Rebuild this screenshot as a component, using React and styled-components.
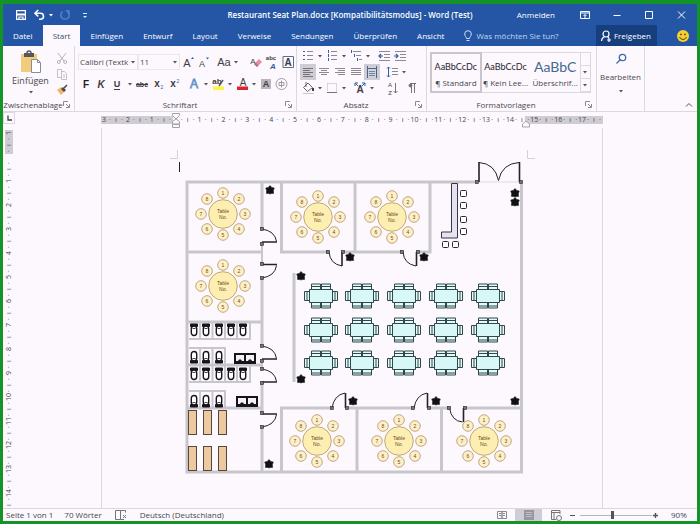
import { useState } from "react";
import styled, { createGlobalStyle, css } from "styled-components";

const theme = {
  blue: "#2456a5",
  darkBlue: "#173f7d",
  green: "#149328",
  bg: "#fcf8fe",
  line: "#dcd8e0",
  shade: "#cfccd3",
  text: "#4a474e",
  ink: "#26242a",
  wall: "#c8c5cc",
};

const tabs = [
  "Datei",
  "Start",
  "Einfügen",
  "Entwurf",
  "Layout",
  "Verweise",
  "Sendungen",
  "Überprüfen",
  "Ansicht",
];

const styleCards = [
  { sample: "AaBbCcDc", name: "¶ Standard" },
  { sample: "AaBbCcDc", name: "¶ Kein Lee..." },
  { sample: "AaBbC", name: "Überschrif...", heading: true },
];

// ribbon icons, all drawn on a 16x16 grid
const lines = (color, rows) =>
  rows.map(([x1, x2, y]) => (
    <path key={`${x1}-${y}`} d={`M${x1} ${y}H${x2}`} stroke={color} />
  ));

const letter = (text, x, y, size, extra) => (
  <text x={x} y={y} fontSize={size} textAnchor="middle" fill="#3f3c44" {...extra}>
    {text}
  </text>
);

const glyphs = {
  save: (
    <g fill="none" stroke="#fff" strokeWidth="1.2">
      <path d="M3.6 3.6h8.8v8.8H3.6z" />
      <path d="M3.5 7.5h9" strokeWidth="2" />
      <path d="M6 12V10h4v2" />
    </g>
  ),
  undo: (
    <g fill="none" stroke="#fff" strokeWidth="1.6">
      <path d="M4.5 6.2h5a3 3 0 0 1 0 6H8" />
      <path d="M7.2 3 4 6.2l3.2 3.2" />
    </g>
  ),
  redo: (
    <g fill="none" stroke="#5d88c8" strokeWidth="1.3">
      <path d="M10.5 4.6A4.2 4.2 0 1 1 5.6 4.6" />
      <path d="M8.6 3.8h3.2V7" />
    </g>
  ),
  customize: (
    <g fill="#dce7f6">
      <path d="M6 6h4v1H6zM6 9h4l-2 2z" />
    </g>
  ),
  ribbonOptions: (
    <g fill="none" stroke="#fff">
      <path d="M3.5 4.5h9v7h-9zM3.5 6h9M8 11V7.500M6.500 9 8 7.500 9.500 9" />
    </g>
  ),
  minimize: <path d="M4.500 8.500h7" stroke="#fff" />,
  maximize: <path d="M4.500 4.500h7v7h-7z" stroke="#fff" fill="none" />,
  close: <path d="m5 4.500 7 7m0-7-7 7" stroke="#fff" fill="none" />,
  bulb: (
    <g fill="none" stroke="#cfdef3">
      <path d="M6.500 10.500C6.500 9 4.700 8.300 4.700 6a3.300 3.300 0 0 1 6.600 0c0 2.300-1.800 3-1.800 4.500zM6.500 12.500h3" />
    </g>
  ),
  share: (
    <g fill="none" stroke="#fff" strokeWidth="1.200">
      <circle cx="8" cy="6" r="3" />
      <path d="M3.500 13c.2-2.500 1.500-3.600 3-4.200M9.500 8.600l1.400 1.400M9 12h4M11 10v4" />
    </g>
  ),
  smiley: (
    <g>
      <circle cx="8" cy="8" r="6" fill="#f8cf31" />
      <circle cx="6" cy="6.400" r=".9" fill="#5b4510" />
      <circle cx="10" cy="6.400" r=".9" fill="#5b4510" />
      <path d="M4.600 9c1 3.200 5.800 3.200 6.800 0" fill="none" stroke="#5b4510" />
    </g>
  ),
  cut: (
    <g fill="none" stroke="#b6b2bb">
      <path d="m4 3 6 8M12 3l-6 8" />
      <circle cx="4.800" cy="12" r="1.500" />
      <circle cx="11.200" cy="12" r="1.500" />
    </g>
  ),
  copy: (
    <g fill="none" stroke="#c3bfc8">
      <path d="M3.500 3.500h4v8h-4zM7.500 5.500h3l2 2v6h-5zM9 9h2M9 11h2" />
    </g>
  ),
  brush: (
    <g>
      <path d="M3 8l4-3 4 4-4 4z" fill="#edb866" />
      <path d="m7 7 2-2 3 3-2 2z" fill="#4d4953" />
      <path d="m10 6 3-3" stroke="#4d4953" strokeWidth="1.600" />
    </g>
  ),
  grow: (
    <g>
      {letter("A", 7, 13, 11)}
      <path d="m11 5 1.500-2L14 5z" fill="#2f5fa8" />
    </g>
  ),
  shrink: (
    <g>
      {letter("A", 6, 13, 9)}
      <path d="M10 3.500h3L11.500 5.500z" fill="#2f5fa8" />
    </g>
  ),
  changeCase: letter("Aa", 8, 12, 11),
  eraser: (
    <g>
      {letter("A", 5, 10, 8)}
      <path d="m6 10 5-5 3 3-5 5z" fill="#e58ba4" />
      <path d="m6 10 1.500-1.500 3 3L9 13z" fill="#b66d87" />
    </g>
  ),
  phonetic: (
    <g>
      {letter("abc", 7, 6, 6, { fontWeight: 700 })}
      {letter("A", 9, 15, 8, { fill: "#2f5fa8", fontStyle: "italic", fontWeight: 700 })}
    </g>
  ),
  boxedA: (
    <g>
      <path d="M3 2.500h10.500v11H3z" fill="none" stroke="#5d7089" />
      {letter("A", 8, 12, 10, { fontWeight: 700 })}
    </g>
  ),
  bold: letter("F", 8, 12, 10, { fontWeight: 700, fill: "#1f1d23" }),
  italic: letter("K", 7, 12, 10, { fontWeight: 700, fontStyle: "italic" }),
  underline: (
    <g>
      {letter("U", 7, 11, 9, { fontWeight: 700 })}
      <path d="M4 13.500h6" stroke="#3f3c44" />
    </g>
  ),
  strike: (
    <g>
      {letter("abc", 8, 11, 7, { fontWeight: 700 })}
      <path d="M2 8.500h12" stroke="#3f3c44" />
    </g>
  ),
  sub: (
    <g>
      {letter("x", 7, 11, 10, { fontWeight: 700 })}
      {letter("2", 12, 13, 5, { fill: "#2f5fa8" })}
    </g>
  ),
  sup: (
    <g>
      {letter("x", 7, 11, 10, { fontWeight: 700 })}
      {letter("2", 12, 7, 5, { fill: "#2f5fa8" })}
    </g>
  ),
  effects: letter("A", 8, 12, 12, { fill: "#fff", stroke: "#5c93cc", strokeWidth: 0.8 }),
  highlight: (
    <g>
      <path d="M3 10.500h11v3.500H3z" fill="#fbf63c" />
      {letter("ab", 7, 8, 8, { fontWeight: 700 })}
      <path d="m9 10 4-6" stroke="#5b5760" strokeWidth="1.500" />
    </g>
  ),
  fontColor: (
    <g>
      {letter("A", 9, 10, 10)}
      <path d="M3 10.500h11v3.500H3z" fill="#dc2430" />
    </g>
  ),
  shadedA: (
    <g>
      <path d="M3 3h10v10H3z" fill="#b9b6be" />
      {letter("A", 8, 11, 9, { fontWeight: 700 })}
    </g>
  ),
  ringed: (
    <g fill="none" stroke="#8b8791" strokeWidth=".8">
      <circle cx="7.500" cy="8" r="5.500" />
      <path d="M5 6.500h5v3H5zM7.500 4.500v7" />
    </g>
  ),
  bullets: (
    <g>
      {lines("#8c8892", [[7, 13, 3.5], [7, 13, 7.5], [7, 13, 11.5]])}
      {lines("#2f5fa8", [[3, 5, 3.5], [3, 5, 7.5], [3, 5, 11.5]])}
    </g>
  ),
  numbers: (
    <g>
      {lines("#8c8892", [[7, 13, 3.5], [7, 13, 7.5], [7, 13, 11.5]])}
      <path d="M4.500 2v3M4.500 6v3M4.500 10v3" stroke="#2f5fa8" />
    </g>
  ),
  multilevel: (
    <g>
      {lines("#8c8892", [[5, 13, 3.5], [8, 13, 7.5], [11, 14, 11.5]])}
      <path d="M3.500 2v3M6.500 6v3M9.500 10v3" stroke="#2f5fa8" />
    </g>
  ),
  outdent: (
    <g>
      {lines("#8c8892", [[3, 14, 3.5], [8, 14, 6.5], [8, 14, 9.5], [3, 14, 12.5]])}
      <path d="M7 8H3M5 6 3 8l2 2" fill="none" stroke="#2f5fa8" strokeWidth="1.200" />
    </g>
  ),
  indent: (
    <g>
      {lines("#8c8892", [[3, 14, 3.5], [8, 14, 6.5], [8, 14, 9.5], [3, 14, 12.5]])}
      <path d="M2 8h4M4 6l2 2-2 2" fill="none" stroke="#2f5fa8" strokeWidth="1.200" />
    </g>
  ),
  left: lines("#77737d", [[3, 13, 4.5], [3, 10, 6.5], [3, 13, 8.5], [3, 10, 10.5], [3, 13, 12.5]]),
  center: lines("#8c8892", [[3, 13, 4.5], [5, 11, 6.5], [3, 13, 8.5], [5, 11, 10.5]]),
  right: lines("#8c8892", [[3, 13, 4.5], [6, 13, 6.5], [3, 13, 8.5], [6, 13, 10.5]]),
  justify: lines("#8c8892", [[3, 13, 4.5], [3, 13, 6.5], [3, 13, 8.5], [3, 13, 10.5]]),
  distribute: (
    <g>
      <path d="M3 3h10v10H3z" fill="#ccd5e2" />
      <path d="M3.500 2v12M12.500 2v12M3 4.500h10" stroke="#45658f" />
      {lines("#77839a", [[5, 11, 7.5], [5, 11, 9.5], [5, 11, 11.5]])}
    </g>
  ),
  spacing: (
    <g>
      {lines("#8c8892", [[8, 14, 4.5], [8, 14, 7.5], [8, 14, 10.5]])}
      <path d="M4.500 3v10M3 4.500 4.500 3 6 4.500M3 11.500 4.500 13 6 11.500" fill="none" stroke="#2f5fa8" />
    </g>
  ),
  bucket: (
    <g fill="none" stroke="#6a6670">
      <path d="m8 3 4.500 4.500-5 4-4-4zM6 2v5" />
      <path d="M13 8v3" stroke="#3f3c44" strokeWidth="2" />
      <path d="M3 13.500h11" stroke="#c9c5ce" />
    </g>
  ),
  borders: (
    <g fill="none" stroke="#b6b2bb">
      <path d="M3.500 3.500h9v8" strokeDasharray="1 1" />
      <path d="M3.500 3.500v8" strokeDasharray="1 1" />
      <path d="M3 12.500h10" stroke="#77737d" />
    </g>
  ),
  asian: (
    <g>
      {letter("A", 8, 13, 10, { fontWeight: 700 })}
      <path d="M3 3l3 3M3 6V3h3M13 3l-3 3M13 6V3h-3" fill="none" stroke="#2f5fa8" />
    </g>
  ),
  sort: (
    <g>
      {letter("A", 6, 7, 6)}
      {letter("Z", 6, 15, 6)}
      <path d="M11.500 3v10M9.500 11l2 2 2-2" fill="none" stroke="#77737d" />
    </g>
  ),
  pilcrow: (
    <g stroke="#77737d" fill="none">
      <path d="M7.500 4v9M10.500 4v9M6 3.500h6" />
      <circle cx="6.500" cy="5.500" r="1.500" fill="#77737d" />
    </g>
  ),
  find: (
    <g fill="none" stroke="#3c6ca8" strokeWidth="1.300">
      <circle cx="9.500" cy="6.500" r="3.200" />
      <path d="M7 9 3.500 12.500" />
    </g>
  ),
  proofing: (
    <g fill="none" stroke="#77737d">
      <path d="M2.500 3.500h5v9h-5zM7.500 12.500v-9h5v2M8 12.500h3M10 8l3 3M13 8l-3 3" />
    </g>
  ),
  readMode: (
    <g fill="none" stroke="#8c8892">
      <path d="M3.500 4.500h4.500v7H3.500zM8 4.500h4.500v7H8zM5 6.500h2M5 8.500h2M9 6.500h2M9 8.500h2" />
    </g>
  ),
  printLayout: (
    <g>
      <path d="M3 3h10v10H3z" fill="#9a969f" />
      {lines("#c0bcc5", [[5, 11, 5.5], [5, 11, 7.5], [5, 11, 9.5]])}
    </g>
  ),
  webLayout: (
    <g fill="none" stroke="#77737d">
      <path d="M12 7V3.500H3.500v9H8M3.500 5.500H12M6 6v6" />
      <circle cx="11" cy="11" r="2.500" />
    </g>
  ),
};

const Glyph = ({ name }) => (
  <GlyphSvg viewBox="0 0 16 16" aria-hidden="true">
    {glyphs[name]}
  </GlyphSvg>
);

const Caret = ({ color = "#55515a" }) => (
  <CaretSvg viewBox="0 0 8 8" aria-hidden="true">
    <path d="M2 3h4L4 5.500z" fill={color} />
  </CaretSvg>
);

const Tool = ({ icon, label, active, caret }) => (
  <ToolButton type="button" aria-label={label} $active={active}>
    <Glyph name={icon} />
    {caret && <Caret />}
  </ToolButton>
);

const PasteIcon = () => (
  <svg width="24" height="24" viewBox="0 0 24 24" aria-hidden="true">
    <path d="M2 4h16v18H2z" fill="#f2cc7c" />
    <path d="M5 3h10v4H5z" fill="#5a5660" />
    <path d="M8 3a2 2 0 0 1 4 0" fill="none" stroke="#5a5660" strokeWidth="1.500" />
    <path d="M12.500 9.500h6l3 3v10h-9z" fill="#fff" stroke="#8f8b96" />
    <path d="M18.500 9.500v3h3" fill="none" stroke="#8f8b96" />
  </svg>
);

// floor plan
const seatSpots = [
  [0, -21],
  [16, -15],
  [22, 0],
  [16, 15],
  [0, 21],
  [-16, 15],
  [-22, 0],
  [-16, -15],
];

const RoundTable = ({ x, y }) => (
  <g transform={`translate(${x} ${y})`} stroke="#b3945f" strokeWidth=".8" fill="#fdf0c8">
    <circle r="14.300" fill="#fdeeb2" />
    {seatSpots.map(([sx, sy], i) => (
      <circle key={i} cx={sx} cy={sy} r="5.300" />
    ))}
    <g stroke="none" fill="#6b4a25" textAnchor="middle">
      {seatSpots.map(([sx, sy], i) => (
        <text key={i} x={sx} y={sy + 2} fontSize="5">
          {i + 1}
        </text>
      ))}
      <text y="-1" fontSize="5">
        Table
      </text>
      <text y="5" fontSize="5">
        No.
      </text>
    </g>
  </g>
);

const DiningTable = ({ x, y }) => (
  <g transform={`translate(${x} ${y})`} fill="#e4fbfb" stroke="#31484b">
    {[-9.5, 0.5].map((cx) => (
      <g key={cx}>
        <path d={`M${cx} -12h9v7h-9zM${cx} -9.500h9`} />
        <path d={`M${cx} 5h9v7h-9zM${cx} 10h9`} />
      </g>
    ))}
    <path d="M-16.500-4.500h6v9h-6zM-14-4.500v9M10.500-4.500h6v9h-6zM14-4.500v9" />
    <path d="M-11.500-6.500h23v13h-23z" fill="#d7f8f6" />
  </g>
);

const Plant = ({ x, y }) => (
  <path
    transform={`translate(${x} ${y})`}
    d="M0-4.500 1.800-2.600 4.300-2 3.400.6 3.600 3.400 1.200 3.600 0 4-1.200 3.600-3.600 3.400-3.400.6-4.300-2-1.800-2.600z"
    fill="#111"
    stroke="#111"
    strokeWidth=".5"
  />
);

const Toilet = ({ x, y, flip }) => (
  <g transform={`translate(${x} ${y}) scale(1 ${flip ? -1 : 1})`} fill="#fff" stroke="#17151a">
    <path d="M-3.500-6h7v2.500h-7z" fill="#17151a" />
    <rect x="-2.700" y="-4" width="5.400" height="9.500" rx="2.700" strokeWidth="1.400" />
    <path d="M-1.500-1.500h3" strokeWidth=".8" />
  </g>
);

const Sink = ({ x, y }) => (
  <g transform={`translate(${x} ${y})`}>
    <path d="M0 0h22v11H0z" fill="#17151a" />
    <path d="M2 2h8v6H8L7 6.500H5L4 8H2zM12 2h8v6h-2l-1-1.500h-2L14 8h-2z" fill="#f4f2f6" />
  </g>
);

const roundTables = [[223, 214], [223, 286], [318, 217], [392, 217], [317, 441], [399, 441], [484, 441]];
const plants = [
  [270, 190], [350, 257], [424, 257], [301, 276], [301, 379], [515, 193],
  [515, 202], [269, 464], [353, 401], [436, 401], [515, 401],
];
const tableColumns = [321, 362, 404, 446, 488];
const tableRows = [296, 330, 363];
const stallColumns = [194, 206, 219, 231, 243];
const hinges = [
  [262, 229], [262, 244], [262, 264], [262, 278], [262, 346], [262, 361], [262, 369], [262, 383],
  [262, 413], [262, 427], [328, 252], [343, 252], [402, 252], [418, 252], [332, 408], [347, 408],
  [413, 408], [429, 408], [449, 408], [465, 408], [477, 182], [521, 182],
];

const FloorPlan = () => (
  <PlanSvg viewBox="168 148 368 332" role="img" aria-label="Restaurant Seat Plan">
    <path d="M170 158.500h7.500V150M535 158.500h-7.500V150" fill="none" stroke="#d4d0d9" />
    <path d="M179.500 162v10" stroke="#222" />
    <g fill="none" stroke={theme.wall} strokeWidth="3">
      <path d="M477 182H187v290h334.500V182" />
      <path d="M262 182v47M262 278v68M262 383v30M262 427v45" />
      <path d="M262 244v20M262 361v8" strokeWidth="2" />
      <path d="M187 252h75M187 322h75M187 365h75M187 408h75" />
      <path d="M281.500 182v70H328M343 252h59M355 182v70M418 252h12v-70" />
      <path d="M281.500 472v-64H332M347 408h66M429 408h20M465 408h56M357 408v64M441.500 408v64" />
      <path d="M294 273v109" />
      <path d="M189 339h61M200 322v17M212.500 322v17M225 322v17M237 322v17M250 322v18" strokeWidth="2" />
      <path d="M189 348h37M200 348v17M212.500 348v17M225 348v17" strokeWidth="2" />
      <path d="M189 382h61M200 365v17M212.500 365v17M225 365v17M237 365v17M250 365v18" strokeWidth="2" />
      <path d="M189 391h37M200 391v17M212.500 391v17M225 391v17" strokeWidth="2" />
    </g>
    <path d="M479 182h40" stroke="#dedbe2" />
    <g fill="none" stroke="#242228">
      <path d="M262 229q13 2 14.500 12.500" />
      <path d="M262 278q13-2 14.500-12.500" />
      <path d="M262 346q13 2 14.500 12.500" />
      <path d="M262 369q13 2 14.500 12.500" />
      <path d="M262 427q13-2 14.500-12.500" />
      <path d="M329 252q1 12 13 14" />
      <path d="M403 252q1 12 13 14" />
      <path d="M332 408q2-13 13-15" />
      <path d="M414 408q2-13 13-15" />
      <path d="M449.500 408q2 13 13 14" />
      <path d="M479 162.500q16 1 19.500 18q3.500-17 20.500-18" />
      <path
        d="M262 242h15M262 264.500h15M262 359h15M262 382h15M262 414h15M342 252v14M416.500 252v14M345.500 393v15M427.500 393v15M463.500 408v14M479 162v20M519.500 162v20"
        strokeWidth="1.600"
      />
    </g>
    {hinges.map(([x, y]) => (
      <rect key={`${x}-${y}`} x={x - 1.5} y={y - 1.5} width="3" height="3" fill="#77737d" stroke="#242228" strokeWidth=".6" />
    ))}
    <path d="M451.500 183.500h6v54.500h-16v-6h10z" fill="#e6e2f1" stroke="#3a3742" />
    <g fill="#fff" stroke="#2b2930">
      {[[463, 193], [463, 205], [463, 219], [463, 231], [445, 244], [455, 244]].map(([x, y]) => (
        <rect key={`${x}-${y}`} x={x - 2.5} y={y - 2.5} width="6" height="6" rx="1" />
      ))}
    </g>
    {roundTables.map(([x, y]) => (
      <RoundTable key={`${x}-${y}`} x={x} y={y} />
    ))}
    {tableRows.map((y) => tableColumns.map((x) => <DiningTable key={`${x}-${y}`} x={x} y={y} />))}
    {stallColumns.map((x) => (
      <g key={x}>
        <Toilet x={x} y={330} />
        <Toilet x={x} y={374} />
      </g>
    ))}
    {stallColumns.slice(0, 3).map((x) => (
      <g key={x}>
        <Toilet x={x} y={357} flip />
        <Toilet x={x} y={401} flip />
      </g>
    ))}
    <Sink x={234} y={353} />
    <Sink x={236} y={396} />
    {[188.5, 203.5, 218.5].map((x) =>
      [410.5, 446.5].map((y) => (
        <rect key={`${x}-${y}`} x={x} y={y} width="8" height="24" fill="#ecc99f" stroke="#57493a" />
      ))
    )}
    {plants.map(([x, y]) => (
      <Plant key={`${x}-${y}`} x={x} y={y} />
    ))}
  </PlanSvg>
);

// four marks per centimetre: number, dot, tick, dot
const rulerMark = (quarter) => {
  if (quarter % 4 === 0) return quarter === 0 ? "" : String(Math.abs(quarter / 4));
  return quarter % 2 === 0 ? "ı" : "·";
};

const range = (from, to) => Array.from({ length: to - from }, (_, i) => from + i);

const RulerPart = ({ from, to, shaded, vertical }) => (
  <RulerSegment $count={to - from} $shaded={shaded} $vertical={vertical}>
    {range(from, to).map((q) => (
      <RulerMark key={q} $vertical={vertical}>
        {rulerMark(q)}
      </RulerMark>
    ))}
  </RulerSegment>
);

const GroupFooter = ({ children }) => (
  <GroupLabel>
    <span>{children}</span>
    <Launcher type="button" aria-label={`${children} öffnen`}>
      <svg width="7" height="7" viewBox="0 0 7 7">
        <path d="M.5 5V.5H5M3 3l3 3M6.500 3v3.500H3" fill="none" stroke="#8c8892" />
      </svg>
    </Launcher>
  </GroupLabel>
);

const App = () => {
  const [activeTab, setActiveTab] = useState("Start");
  const [activeStyle, setActiveStyle] = useState(0);
  const [zoom, setZoom] = useState(90);

  return (
    <Window>
      <GlobalStyle />
      <Header>
        <TitleBar>
          <QuickAccess>
            <HeaderButton type="button" aria-label="Speichern" $width={20}>
              <Glyph name="save" />
            </HeaderButton>
            <HeaderButton type="button" aria-label="Rückgängig" $width={24}>
              <Glyph name="undo" />
              <Caret color="#fff" />
            </HeaderButton>
            <HeaderButton type="button" aria-label="Wiederholen" $width={20}>
              <Glyph name="redo" />
            </HeaderButton>
            <HeaderButton type="button" aria-label="Symbolleiste anpassen" $width={20}>
              <Glyph name="customize" />
            </HeaderButton>
          </QuickAccess>
          <Title>Restaurant Seat Plan.docx [Kompatibilitätsmodus] - Word (Test)</Title>
          <WindowControls>
            <SignIn type="button">Anmelden</SignIn>
            <HeaderButton type="button" aria-label="Menüband-Anzeigeoptionen" $width={32}>
              <Glyph name="ribbonOptions" />
            </HeaderButton>
            <HeaderButton type="button" aria-label="Minimieren" $width={32}>
              <Glyph name="minimize" />
            </HeaderButton>
            <HeaderButton type="button" aria-label="Maximieren" $width={32}>
              <Glyph name="maximize" />
            </HeaderButton>
            <HeaderButton type="button" aria-label="Schließen" $width={32}>
              <Glyph name="close" />
            </HeaderButton>
          </WindowControls>
        </TitleBar>

        <TabBar>
          {tabs.map((tab) => (
            <Tab key={tab} type="button" $active={tab === activeTab} onClick={() => setActiveTab(tab)}>
              {tab}
            </Tab>
          ))}
          <TellMe>
            <Glyph name="bulb" />
            <TellMeInput aria-label="Was möchten Sie tun?" placeholder="Was möchten Sie tun?" />
          </TellMe>
          <ShareButton type="button">
            <Glyph name="share" />
            Freigeben
          </ShareButton>
          <HeaderButton type="button" aria-label="Feedback" $width={28}>
            <Glyph name="smiley" />
          </HeaderButton>
        </TabBar>
      </Header>

      <Ribbon>
        <Group $width={72}>
          <ClipboardTools>
            <BigButton type="button">
              <PasteIcon />
              Einfügen
              <Caret />
            </BigButton>
            <Stack>
              <Tool icon="cut" label="Ausschneiden" />
              <Tool icon="copy" label="Kopieren" />
              <Tool icon="brush" label="Format übertragen" />
            </Stack>
          </ClipboardTools>
          <GroupFooter>Zwischenablage</GroupFooter>
        </Group>

        <Group $width={222}>
          <FontTools>
            <ToolRow>
              <SelectBox $width={60}>
                <select aria-label="Schriftart">
                  <option>Calibri (Textk</option>
                </select>
                <Caret />
              </SelectBox>
              <SelectBox $width={42}>
                <select aria-label="Schriftgrad">
                  <option>11</option>
                </select>
                <Caret />
              </SelectBox>
              <Tool icon="grow" label="Schriftgrad vergrößern" />
              <Tool icon="shrink" label="Schriftgrad verkleinern" />
              <Space />
              <Tool icon="changeCase" label="Groß-/Kleinschreibung" caret />
              <Space />
              <Space />
              <Tool icon="eraser" label="Formatierung löschen" />
              <Tool icon="phonetic" label="Phonetische Anleitung" />
              <Tool icon="boxedA" label="Zeichenrahmen" />
            </ToolRow>
            <ToolRow>
              <Tool icon="bold" label="Fett" />
              <Tool icon="italic" label="Kursiv" />
              <Tool icon="underline" label="Unterstrichen" caret />
              <Tool icon="strike" label="Durchgestrichen" />
              <Tool icon="sub" label="Tiefgestellt" />
              <Tool icon="sup" label="Hochgestellt" />
              <Space />
              <Tool icon="effects" label="Texteffekte" caret />
              <Tool icon="highlight" label="Texthervorhebungsfarbe" caret />
              <Tool icon="fontColor" label="Schriftfarbe" caret />
              <Tool icon="shadedA" label="Zeichenschattierung" />
              <Tool icon="ringed" label="Umschlossene Zeichen" />
            </ToolRow>
          </FontTools>
          <GroupFooter>Schriftart</GroupFooter>
        </Group>

        <Group $width={130}>
          <ParagraphTools>
            <ToolRow $short>
              <Tool icon="bullets" label="Aufzählungszeichen" caret />
              <Tool icon="numbers" label="Nummerierung" caret />
              <Tool icon="multilevel" label="Liste mit mehreren Ebenen" caret />
              <Space />
              <Tool icon="outdent" label="Einzug verkleinern" />
              <Tool icon="indent" label="Einzug vergrößern" />
            </ToolRow>
            <ToolRow $short>
              <Tool icon="left" label="Linksbündig" active />
              <Tool icon="center" label="Zentriert" />
              <Tool icon="right" label="Rechtsbündig" />
              <Tool icon="justify" label="Blocksatz" />
              <Tool icon="distribute" label="Verteilt" active />
              <Space />
              <Tool icon="spacing" label="Zeilenabstand" caret />
            </ToolRow>
            <ToolRow $short>
              <Tool icon="bucket" label="Schattierung" caret />
              <Tool icon="borders" label="Rahmen" caret />
              <Space />
              <Tool icon="asian" label="Asiatisches Layout" caret />
              <Space />
              <Space />
              <Tool icon="sort" label="Sortieren" />
              <Space />
              <Tool icon="pilcrow" label="Alle anzeigen" />
            </ToolRow>
          </ParagraphTools>
          <GroupFooter>Absatz</GroupFooter>
        </Group>

        <Group $width={170}>
          <StyleTools>
            <Gallery>
              {styleCards.map(({ sample, name, heading }, index) => (
                <StyleCard
                  key={name}
                  type="button"
                  $active={index === activeStyle}
                  onClick={() => setActiveStyle(index)}
                >
                  <Sample $heading={heading}>{sample}</Sample>
                  <span>{name}</span>
                </StyleCard>
              ))}
              <GalleryScroll>
                <button type="button" aria-label="Nach oben" disabled />
                <button type="button" aria-label="Nach unten">
                  <Caret />
                </button>
                <button type="button" aria-label="Weitere">
                  <Caret />
                </button>
              </GalleryScroll>
            </Gallery>
          </StyleTools>
          <GroupFooter>Formatvorlagen</GroupFooter>
        </Group>

        <Group $width={48}>
          <EditButton type="button">
            <Glyph name="find" />
            Bearbeiten
            <Caret />
          </EditButton>
        </Group>
        <CollapseButton type="button" aria-label="Menüband reduzieren">
          <svg width="8" height="6" viewBox="0 0 8 6">
            <path d="m1 4.500 3-3 3 3" fill="none" stroke="#55515a" />
          </svg>
        </CollapseButton>
      </Ribbon>

      <RulerBar>
        <TabStop type="button" aria-label="Tabstopp">
          <svg width="8" height="8" viewBox="0 0 8 8">
            <path d="M3 1.500v4.500h4" fill="none" stroke="#3f3c44" strokeWidth="1.300" />
          </svg>
        </TabStop>
        <Ruler>
          <RulerPart from={-12} to={0} shaded />
          <RulerPart from={0} to={59} />
          <RulerPart from={59} to={72} shaded />
          <IndentMarkers viewBox="0 0 502 16" aria-hidden="true">
            <g fill="#fcf8fe" stroke="#a5a1aa">
              <path d="M71.500 1.500h7v2l-3.500 3.500-3.500-3.500zM71.500 12v-2.500L75 7l3.500 2.500V12zM71.500 12.500h7v3h-7z" />
              <path d="M421.500 15v-3l3.500-3 3.500 3v3z" />
            </g>
          </IndentMarkers>
        </Ruler>
      </RulerBar>

      <Workspace>
        <SideRuler>
          <RulerPart from={-4} to={0} shaded vertical />
          <RulerPart from={0} to={59} vertical />
        </SideRuler>
        <Canvas>
          <Page>
            <FloorPlan />
          </Page>
        </Canvas>
      </Workspace>

      <StatusBar>
        <StatusItem>Seite 1 von 1</StatusItem>
        <StatusItem>70 Wörter</StatusItem>
        <Glyph name="proofing" />
        <StatusItem>Deutsch (Deutschland)</StatusItem>
        <ViewTools>
          <ViewButton type="button" aria-label="Lesemodus">
            <Glyph name="readMode" />
          </ViewButton>
          <ViewButton type="button" aria-label="Seitenlayout" $active>
            <Glyph name="printLayout" />
          </ViewButton>
          <ViewButton type="button" aria-label="Weblayout">
            <Glyph name="webLayout" />
          </ViewButton>
          <ZoomButton type="button" aria-label="Verkleinern" onClick={() => setZoom(zoom - 10)}>
            <svg width="7" height="7" viewBox="0 0 7 7">
              <path d="M1 3.500h5" stroke="#55515a" />
            </svg>
          </ZoomButton>
          <ZoomSlider
            type="range"
            aria-label="Zoom"
            min="10"
            max="190"
            value={zoom}
            onChange={(event) => setZoom(Number(event.target.value))}
          />
          <ZoomButton type="button" aria-label="Vergrößern" onClick={() => setZoom(zoom + 10)}>
            <svg width="7" height="7" viewBox="0 0 7 7">
              <path d="M1 3.500h5M3.500 1v5" stroke="#55515a" strokeWidth="1.400" />
            </svg>
          </ZoomButton>
          <ZoomValue>{zoom}%</ZoomValue>
        </ViewTools>
      </StatusBar>
    </Window>
  );
};

// styles
const GlobalStyle = createGlobalStyle`
  * {
    box-sizing: border-box;
  }

  body {
    margin: 0;
    font: 8px/12px "Open Sans", "Noto Sans", sans-serif;
    color: ${theme.text};
  }

  button, input, select {
    margin: 0;
    padding: 0;
    border: 0;
    background: none;
    color: inherit;
    font: inherit;
  }

  svg {
    display: block;
    flex: none;
  }
`;

const Window = styled.div`
  display: flex;
  flex-direction: column;
  min-height: 100vh;
  border: solid ${theme.green};
  border-width: 4px 3px 3px;
  background: ${theme.bg};
`;

const Header = styled.header`
  background: ${theme.blue};
  color: #fff;
`;

const TitleBar = styled.div`
  display: grid;
  grid-template-columns: 1fr auto 1fr;
  align-items: center;
  height: 21px;
`;

const QuickAccess = styled.div`
  display: flex;
  padding-left: 8px;
`;

const HeaderButton = styled.button`
  display: flex;
  align-items: center;
  justify-content: center;
  width: ${({ $width }) => $width}px;
  height: 16px;
`;

const GlyphSvg = styled.svg`
  width: 16px;
  height: 16px;
  font-family: "Liberation Sans", sans-serif;
`;

const CaretSvg = styled.svg`
  width: 8px;
  height: 8px;
`;

const Title = styled.h1`
  margin: 0;
  font-size: 8px;
  font-weight: 600;
  white-space: nowrap;
`;

const WindowControls = styled.div`
  display: flex;
  justify-content: flex-end;
`;

const SignIn = styled.button`
  margin-right: 14px;
  font-weight: 500;
`;

const TabBar = styled.nav`
  display: flex;
  align-items: center;
  height: 21px;
`;

const Tab = styled.button`
  height: 21px;
  padding: 0 10px;
  font-weight: 500;
  white-space: nowrap;

  ${({ $active }) =>
    $active &&
    css`
      background: ${theme.bg};
      color: #3d4d6b;
    `}
`;

const TellMe = styled.label`
  display: flex;
  flex: 1;
  align-items: center;
  padding-left: 6px;
`;

const TellMeInput = styled.input`
  flex: 1;
  min-width: 0;
  height: 16px;

  &::placeholder {
    color: #c3d4ee;
    opacity: 1;
  }
`;

const ShareButton = styled.button`
  display: flex;
  align-items: center;
  height: 21px;
  margin-right: 12px;
  padding: 0 6px 0 2px;
  background: ${theme.darkBlue};
  font-weight: 500;
`;

const Ribbon = styled.section`
  display: flex;
  height: 66px;
  border-bottom: 1px solid ${theme.line};
`;

const Group = styled.div`
  display: flex;
  flex: none;
  flex-direction: column;
  justify-content: space-between;
  width: ${({ $width }) => $width}px;
  border-right: 1px solid ${theme.line};
`;

const GroupLabel = styled.div`
  display: flex;
  align-items: center;
  height: 13px;

  span {
    flex: 1;
    text-align: center;
  }
`;

const Launcher = styled.button`
  width: 11px;
`;

const ClipboardTools = styled.div`
  display: flex;
  padding: 4px 4px 0;
`;

const BigButton = styled.button`
  display: flex;
  flex: 1;
  flex-direction: column;
  align-items: center;
  gap: 1px;
  font-size: 9px;
`;

const Stack = styled.div`
  display: flex;
  flex-direction: column;
`;

const ToolButton = styled.button`
  display: flex;
  flex: none;
  align-items: center;
  height: 16px;
  background: ${({ $active }) => ($active ? theme.shade : "none")};
`;

const FontTools = styled.div`
  padding: 5px 0 0 3px;
`;

const ParagraphTools = styled.div`
  padding: 2px 0 0 3px;
`;

const ToolRow = styled.div`
  display: flex;
  align-items: center;
  height: ${({ $short }) => ($short ? 16 : 22)}px;
`;

const Space = styled.span`
  width: 4px;
`;

const SelectBox = styled.span`
  display: flex;
  align-items: center;
  width: ${({ $width }) => $width}px;
  height: 16px;
  border: 1px solid #ebe7ef;

  select {
    flex: 1;
    min-width: 0;
    padding-left: 1px;
    appearance: none;
  }
`;

const StyleTools = styled.div`
  padding: 6px 5px 0 3px;
`;

const Gallery = styled.div`
  display: flex;
  height: 41px;
  border: 1px solid ${theme.line};
`;

const StyleCard = styled.button`
  display: flex;
  flex: 1;
  flex-direction: column;
  align-items: center;
  justify-content: space-between;
  min-width: 0;
  padding: 5px 1px 3px;
  overflow: hidden;
  white-space: nowrap;
  outline: ${({ $active }) => ($active ? "2px solid #c9c5ce" : "none")};
  outline-offset: -1px;
`;

const Sample = styled.span`
  color: ${({ $heading }) => ($heading ? "#45688f" : theme.ink)};
  font-family: Lato, sans-serif;
  font-size: ${({ $heading }) => ($heading ? 14 : 9)}px;
  line-height: 18px;
`;

const GalleryScroll = styled.div`
  display: flex;
  flex-direction: column;
  width: 10px;

  button {
    flex: 1;
    border: solid ${theme.line};
    border-width: 0 0 1px 1px;
  }
`;

const EditButton = styled.button`
  display: flex;
  flex-direction: column;
  align-items: center;
  gap: 4px;
  padding-top: 5px;
`;

const CollapseButton = styled.button`
  align-self: flex-end;
  margin: 0 4px 3px auto;
`;

const RulerBar = styled.div`
  display: flex;
  height: 16px;
  padding-right: 8px;
`;

const TabStop = styled.button`
  display: flex;
  align-items: center;
  justify-content: center;
  width: 12px;
  height: 12px;
  border: 1px solid ${theme.line};
`;

const Ruler = styled.div`
  position: relative;
  display: flex;
  align-items: center;
  width: 502px;
  margin: 0 auto;
`;

const RulerSegment = styled.div`
  display: flex;
  flex: ${({ $count }) => $count} 0 0;
  height: 8px;
  line-height: 8px;
  background: ${({ $shaded }) => ($shaded ? theme.shade : "none")};

  ${({ $vertical, $count }) =>
    $vertical &&
    css`
      flex: none;
      flex-direction: column;
      width: 8px;
      height: ${$count * 6}px;
    `}
`;

const RulerMark = styled.span`
  display: flex;
  flex: 1 0 0;
  align-items: center;
  justify-content: center;
  width: ${({ $vertical }) => ($vertical ? "8px" : "0")};
  min-width: 0;
  min-height: 0;
  font-size: 7px;
  transform: ${({ $vertical }) => ($vertical ? "rotate(-90deg)" : "none")};
`;

const IndentMarkers = styled.svg`
  position: absolute;
  inset: 0;
`;

const Workspace = styled.main`
  display: flex;
  flex: 1;
  padding-right: 8px;
`;

const SideRuler = styled.div`
  width: 12px;
  padding: 2px 0 0 2px;
`;

const Canvas = styled.div`
  display: flex;
  flex: 1;
  justify-content: center;
`;

const Page = styled.article`
  width: 502px;
  padding: 20px 66px 28px;
  border: solid ${theme.line};
  border-width: 0 1px;
`;

const PlanSvg = styled.svg`
  width: 100%;
  font-family: "Liberation Sans", sans-serif;
`;

const StatusBar = styled.footer`
  display: flex;
  align-items: center;
  gap: 11px;
  height: 13px;
  padding-left: 3px;
  border-top: 1px solid ${theme.line};
`;

const StatusItem = styled.span`
  white-space: nowrap;
`;

const ViewTools = styled.div`
  display: flex;
  align-items: center;
  margin-left: auto;
`;

const ViewButton = styled.button`
  display: flex;
  align-items: center;
  justify-content: center;
  width: 27px;
  height: 12px;
  background: ${({ $active }) => ($active ? theme.shade : "none")};
`;

const ZoomButton = styled.button`
  width: 11px;
`;

const ZoomSlider = styled.input`
  width: 72px;
  height: 10px;
  appearance: none;
  background: linear-gradient(#b9b5be, #b9b5be) center / 100% 1px no-repeat;

  &::-webkit-slider-thumb {
    appearance: none;
    width: 3px;
    height: 8px;
    background: #55515a;
  }
`;

const ZoomValue = styled.output`
  width: 34px;
  padding-left: 8px;
`;

export default App;
